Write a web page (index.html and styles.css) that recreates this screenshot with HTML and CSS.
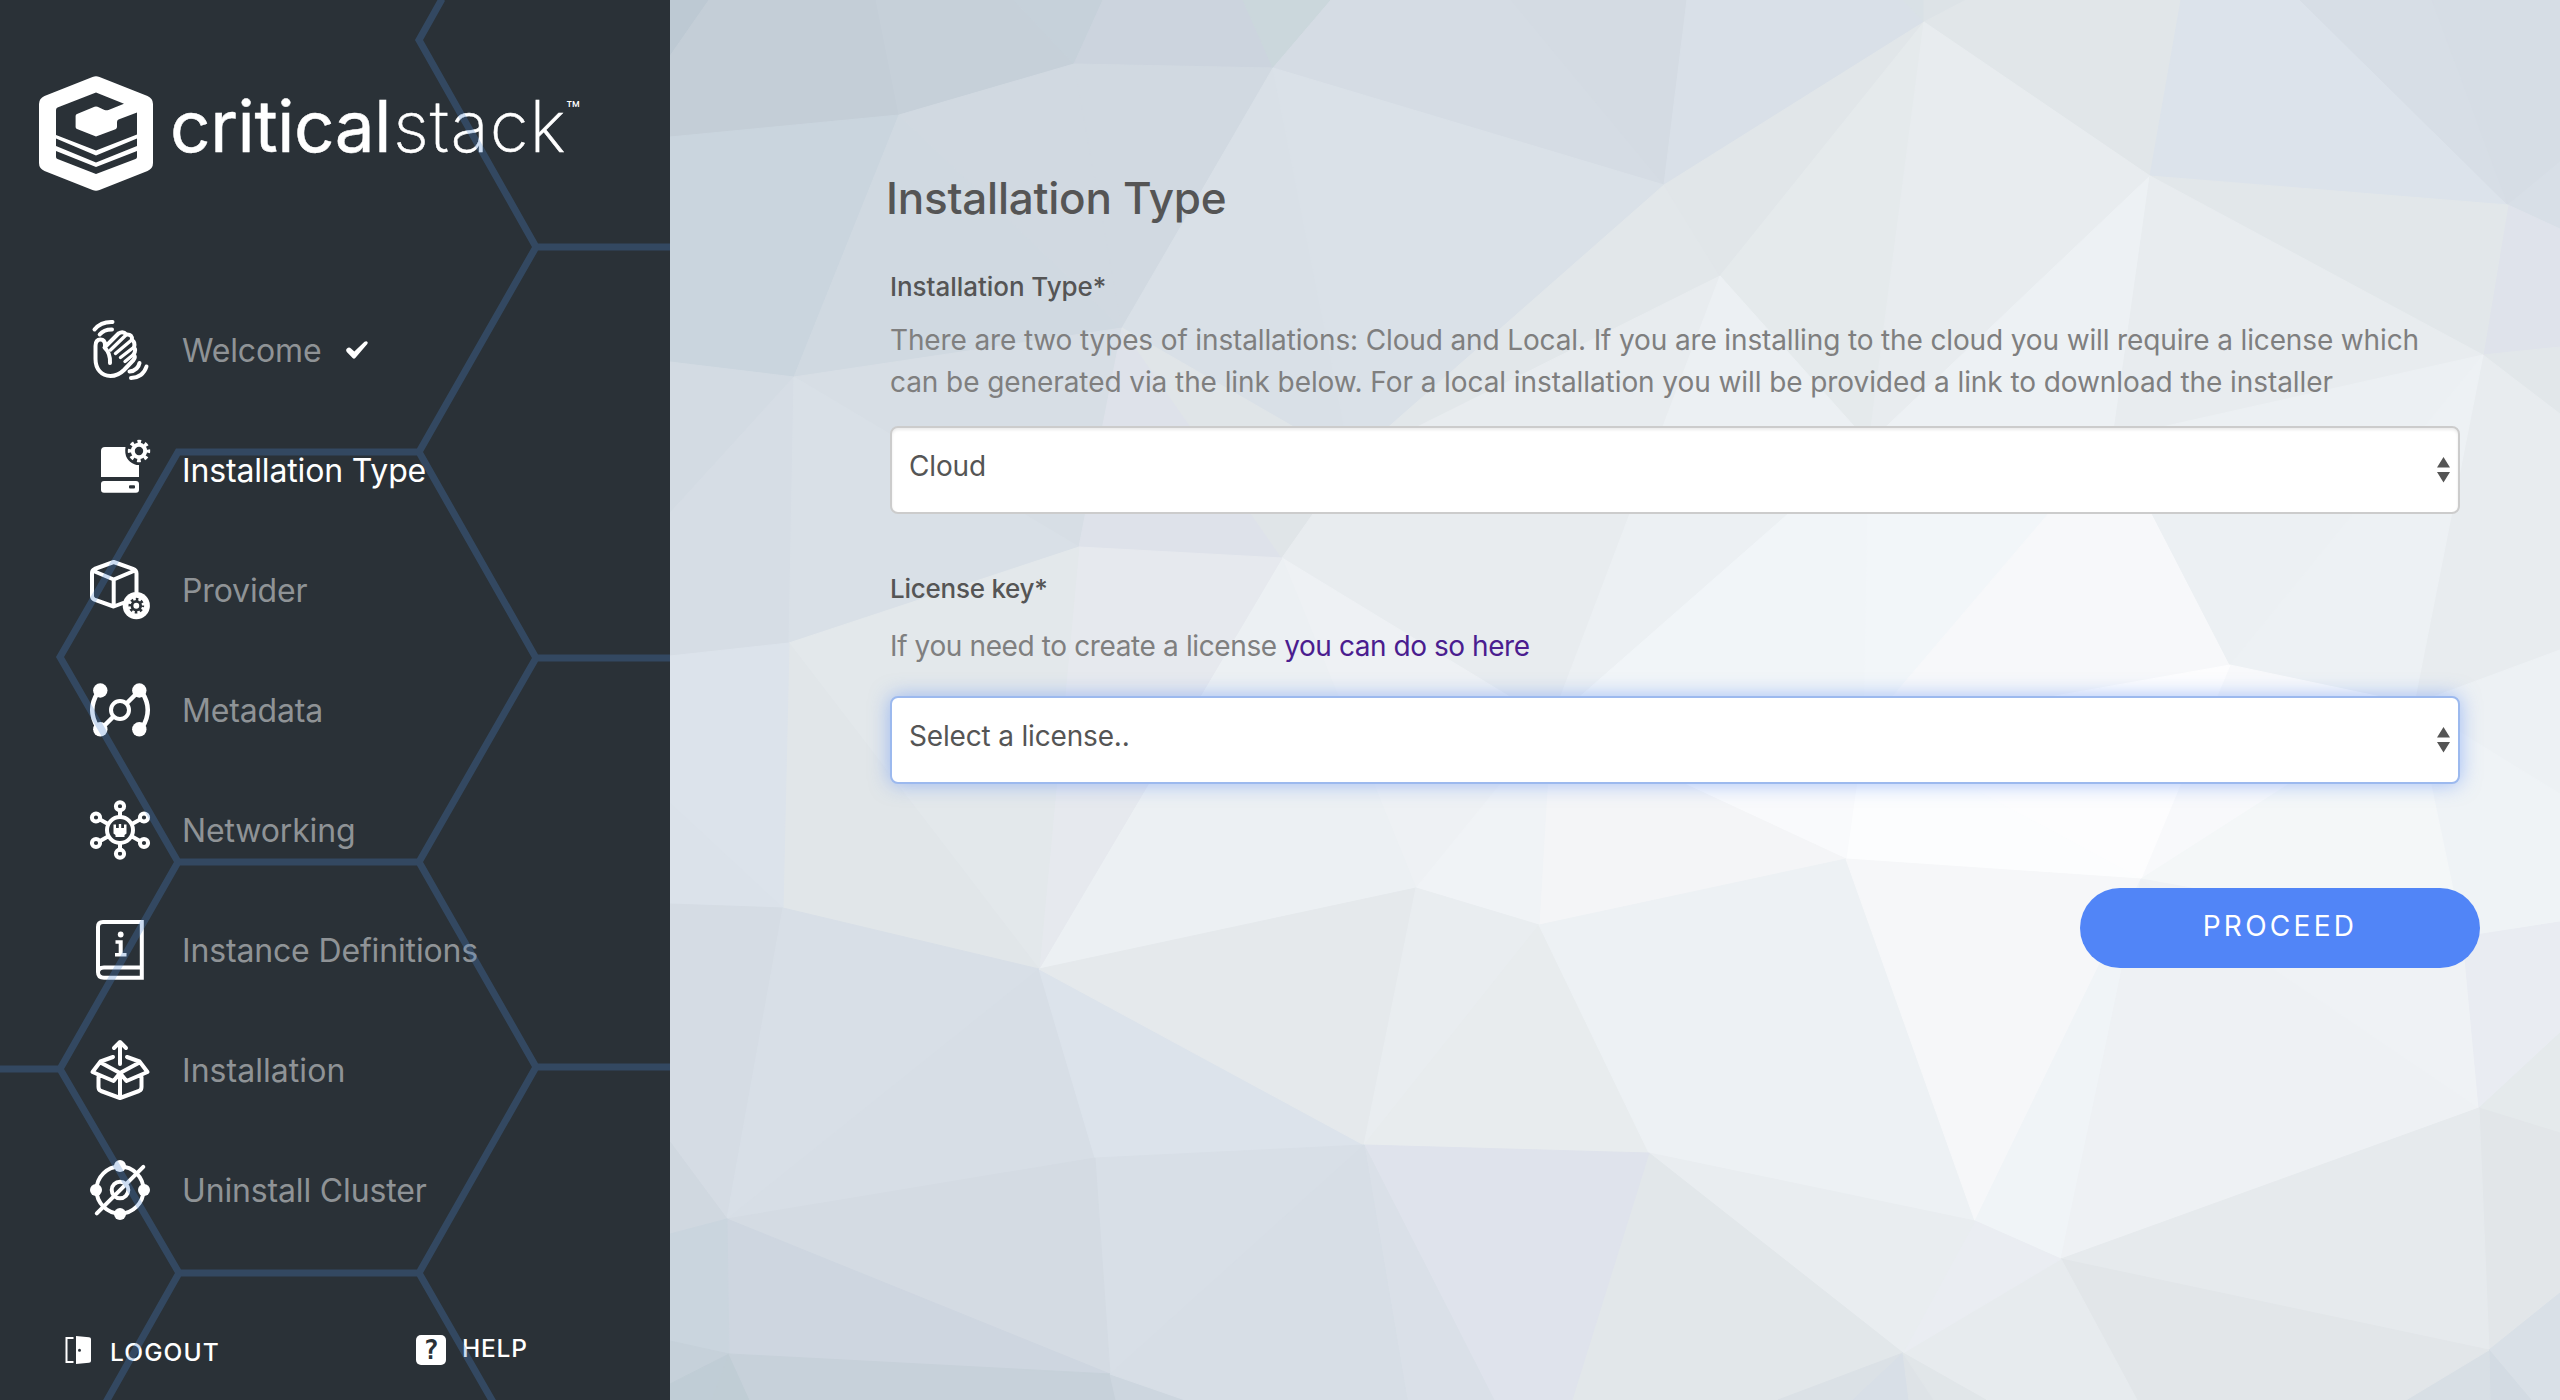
FILE: index.html
```html
<!DOCTYPE html>
<html lang="en">
<head>
<meta charset="utf-8">
<title>Critical Stack - Installation Type</title>
<link rel="stylesheet" href="styles.css">
</head>
<body>
<div class="app">
  <aside class="sidebar">
    <header class="brand">
      <svg class="brand-mark" viewBox="0 0 114 115">
        <path fill="#fff" fill-rule="evenodd" d="M53.500 1Q57 -.6 60.500 1L108.500 20Q114 22.500 114 28V87Q114 92.500 108.500 95L60.500 114Q57 115.600 53.500 114L5.500 95Q0 92.500 0 87V28Q0 22.500 5.500 20Z
          M57 16.500L18.500 31.500Q17 32 17 34V59L57 74.500L98 58.500V36.500L79.500 43.500Q78 44.200 78 46V51Q78 52.500 76.500 53.200L57 60.500L38 53Q36.600 52.300 36.600 51V40Q36.600 38.500 38 38L55.500 30.800Q57 30.200 58.500 30.800L65.500 34Q67.500 34.600 69.500 34L85 27.800Z
          M17 62.500V70L57 86.500L98 70V62.500L57 79.500Z
          M17 75V81Q17 82.500 18.500 83L57 98L96.500 83Q98 82.500 98 81V75L57 91Z"/>
      </svg>
      <span class="wordmark"><span class="w-bold">critical</span><span class="w-thin">stack</span></span><span class="tm">™</span>
    </header>

    <nav class="steps">
      <a class="step">
        <svg class="step-icon line" viewBox="0 0 60 60"><path stroke-width="4" d="M4.500 9.500Q11 1.500 22.500 2M9.700 14.500Q14 9.300 22 9.500M15 27.500V25Q15 19.500 10.500 19.500Q5.500 19.500 5.500 26V39C5.500 49 11.500 56 20.500 56C26 56 30 54 34 50L43.500 40Q46 37 43.500 34.500Q46.500 30 44 27.500Q45.500 22 42 20Q42.500 14 36.500 14.500Q33 10.500 28.500 13.500L14.500 27.500Q20.500 33 20 43"/><path stroke-width="3.400" d="M20.500 30L35.500 15.500M25.500 33.500L41 20.500M30.500 37.500L43.500 27.500M35 41.500L43.500 34.500"/><path stroke-width="4" d="M39.500 51.500Q48 50.500 49.500 43M41 58Q53 57.500 56.500 46.500"/></svg>
        <span class="step-label">Welcome</span>
        <svg class="check" viewBox="0 0 22 18"><path fill="#fff" d="M1 7.500Q3 5.500 5 7.500L8.300 10.500L18.500 .8Q20.500-.5 21.500 1Q22 2 21.300 3L9.300 17Q8 18.300 6.600 17L.8 11Q-.6 9 1 7.500Z"/></svg>
      </a>
      <a class="step current">
        <svg class="step-icon" viewBox="0 0 60 60">
          <path d="M15 7H35.500Q33.500 20 45 24.500Q47 25.200 49 25V37H11V11Q11 7 15 7Z"/>
          <path fill-rule="evenodd" d="M14 41H46Q49 41 49 44V49.700Q49 52.700 46 52.700H14Q11 52.700 11 49.700V44Q11 41 14 41ZM40 45.200Q39 45.200 39 46.200V47.500Q39 48.500 40 48.500H44Q45 48.500 45 47.500V46.200Q45 45.200 44 45.200Z"/>
          <g transform="translate(49 11)"><circle class="gear-ring" r="6.200"/><circle class="gear-teeth" r="9.200"/></g>
        </svg>
        <span class="step-label">Installation Type</span>
      </a>
      <a class="step">
        <svg class="step-icon" viewBox="0 0 60 60">
          <path class="ln" d="M23.700 2L43 8.800Q46.500 10 46.500 13.500V32M23.700 2L4.500 9Q2 10 2 13V36Q2 38.500 4.500 39.600L23.700 46.500L33 43M3.500 11L23.700 19.500L45 10.500M23.700 19.500V46"/>
          <circle cx="46.300" cy="45.700" r="13.600"/>
          <g transform="translate(46.300 45.700) scale(.7)" class="dark"><circle class="gear-ring" r="6.200"/><circle class="gear-teeth" r="9.200"/></g>
        </svg>
        <span class="step-label">Provider</span>
      </a>
      <a class="step">
        <svg class="step-icon" viewBox="0 0 60 60">
          <circle cx="10.300" cy="10.500" r="7.200"/><circle cx="49.300" cy="10.500" r="7.200"/><circle cx="10.300" cy="49.300" r="7.200"/><circle cx="49.300" cy="49.300" r="7.200"/>
          <circle class="ln" cx="30" cy="30" r="9"/>
          <path class="ln thick" d="M37 23L48 12M23 37L12 48M7.500 13Q-3 30 7.500 47M52.500 13Q63 30 52.500 47"/>
        </svg>
        <span class="step-label">Metadata</span>
      </a>
      <a class="step">
        <svg class="step-icon" viewBox="0 0 60 60">
          <circle class="ln" cx="30" cy="30" r="13"/>
          <g class="ln"><circle cx="30" cy="6.300" r="4.100"/><circle cx="6" cy="17.500" r="4.100"/><circle cx="54" cy="17.500" r="4.100"/><circle cx="6" cy="43" r="4.100"/><circle cx="54" cy="43" r="4.100"/><circle cx="30" cy="53.700" r="4.100"/>
          <path d="M30 10V17M30 43V50M10 19.500L18 24M50 19.500L42 24M10 41L18 36.500M50 41L42 36.500"/></g>
          <path d="M23.500 24.500H26V28H28.800V24H31.200V28H34V24.500H36.500V33.500L34.500 35V37H25.500V35L23.500 33.500Z"/>
        </svg>
        <span class="step-label">Networking</span>
      </a>
      <a class="step">
        <svg class="step-icon" viewBox="0 0 60 60">
          <path class="ln miter" d="M51.800 2H13Q8 2 8 7V52Q8 57.800 14 57.800H51.800ZM51.800 47.500H14Q8 47.500 8 52.500"/>
          <circle cx="30.700" cy="14.500" r="2.900"/>
          <path d="M25.500 20.200H32.700V33H36.500V36.600H25V33H28.700V23.800H25.500Z"/>
        </svg>
        <span class="step-label">Instance Definitions</span>
      </a>
      <a class="step">
        <svg class="step-icon line" viewBox="0 0 60 60">
          <path stroke-width="4" d="M30 24V3M24 8L30 2L36 8M23 17L10.500 21.500L2.500 32L23.500 41L30 33L10.500 22.500M37 17L49.500 21.500L57.500 32L36.500 41L30 33L49.500 22.500M8.500 37V47Q8.500 50 11 51L30 58L49 51Q51.500 50 51.500 47V37M30 33V57"/>
        </svg>
        <span class="step-label wide">Installation</span>
      </a>
      <a class="step">
        <svg class="step-icon" viewBox="0 0 60 60">
          <circle class="ln" cx="30" cy="30" r="23.500"/>
          <circle class="ln" cx="30" cy="30" r="8.300"/>
          <path class="ln" d="M6.800 53.300L53.300 6.800"/>
          <circle cx="30" cy="6" r="6"/><circle cx="54" cy="30" r="6"/><circle cx="30" cy="54" r="6"/><circle cx="6" cy="30" r="6"/>
        </svg>
        <span class="step-label">Uninstall Cluster</span>
      </a>
    </nav>

    <footer class="side-footer">
      <a class="foot logout">
        <svg class="door" viewBox="0 0 26 28"><path fill="none" stroke="#fff" stroke-width="2" d="M8.500 2H1.500V26H8.500"/><path fill="#fff" fill-rule="evenodd" d="M11 0L24 1.200Q26 1.500 26 3V25Q26 26.600 24 26.800L11 28ZM14.500 12.800A1.500 1.500 0 1 0 14.500 15.800A1.500 1.500 0 1 0 14.500 12.800Z"/></svg>
        <span class="foot-label">LOGOUT</span>
      </a>
      <a class="foot help"><span class="qmark">?</span><span class="foot-label">HELP</span></a>
    </footer>

    <svg class="hexes" viewBox="0 0 670 1400">
      <path d="M442-1L419 40L536 247L419 452H178L60 657L178 862H419L536 1067L419 1273H179L60 1069L178 862M536 247H671M419 452L536 658L419 862M536 658H671M536 1067H671M-1 1069H60M179 1273L106 1402M419 1273L493 1402"/>
    </svg>
  </aside>

  <main class="content">
    <svg class="mesh" viewBox="0 0 1890 1400" preserveAspectRatio="none" id="mesh"></svg>
    <form class="form">
      <h1 class="title">Installation Type</h1>
      <div class="field">
        <label class="label">Installation Type*</label>
        <p class="hint"><span class="line-a">There are two types of installations: Cloud and Local. If you are installing to the cloud you will require a license which</span><br><span class="line-b">can be generated via the link below. For a local installation you will be provided a link to download the installer</span></p>
        <div class="select"><span class="value">Cloud</span><svg class="arrows" viewBox="0 0 13 26"><path d="M6.500 0L13 10.500H0ZM0 15H13L6.500 25.500Z"/></svg></div>
      </div>
      <div class="field second">
        <label class="label tight">License key*</label>
        <p class="hint one">If you need to create a license <a class="link">you can do so here</a></p>
        <div class="select focused"><span class="value">Select a license..</span><svg class="arrows" viewBox="0 0 13 26"><path d="M6.500 0L13 10.500H0ZM0 15H13L6.500 25.500Z"/></svg></div>
      </div>
      <button class="proceed" type="button">PROCEED</button>
    </form>
  </main>
</div>
<script src="mesh.js"></script>
</body>
</html>
```
FILE: mesh.js
```
// Shared corner points of the faceted backdrop.
var P = {
  A:[229,115],B:[404,64],C:[603,68],D:[124,377],E:[452,328],F:[409,547],G:[612,558],H:[119,643],I:[681,460],
  J:[994,185],K:[1050,276],L:[1254,22],M:[1480,176],N:[1838,205],O:[1813,355],P:[1560,665],Q:[1199,443],R:[1443,438],
  S:[1744,704],T:[881,722],U:[1471,879],V:[746,888],W:[369,969],X:[113,908],Y:[869,925],Z:[694,1145],
  a:[425,1158],b:[57,1219],c:[440,1374],d:[59,1354],e:[1176,859],f:[979,1153],g:[1305,1221],h:[1391,1259],i:[1233,1353],
  j:[1809,1108],k:[1819,1350],l:[1793,937],m:[1194,730],
  t0:[0,0],t1:[39,0],t2:[206,0],t3:[344,0],t4:[433,0],t5:[573,0],t6:[661,0],t7:[841,0],t8:[1017,0],t9:[1233,0],
  u0:[1254,0],u1:[1296,0],u2:[1511,0],u3:[1630,0],u4:[1762,0],u5:[1890,0],
  r1:[1890,162],r2:[1890,229],r3:[1890,347],r4:[1890,414],r5:[1890,650],r6:[1890,794],r7:[1890,922],r8:[1890,1033],r9:[1890,1133],s1:[1890,1293],s2:[1890,1400],
  l1:[0,56],l2:[0,137],l3:[0,362],l4:[0,513],l5:[0,656],l6:[0,803],l7:[0,904],l8:[0,1142],l9:[0,1234],k1:[0,1341],k2:[0,1384],k3:[0,1400],
  b1:[42,1400],b2:[80,1400],b3:[446,1400],b4:[515,1400],b5:[737,1400],b6:[824,1400],b7:[902,1400],b8:[1108,1400],b9:[1183,1400],
  c1:[1239,1400],c2:[1264,1400],c3:[1316,1400],c4:[1467,1400],c5:[1736,1400],c6:[1820,1400],c7:[1861,1400]
};
// Each facet: its corners, then its colour.
var F = [
  't0 t1 l1|bdc9d3','t1 t2 A l2 l1|c4ced7','t2 t3 B A|c6d0d9','t3 t4 B|c6d1da','t4 t5 C B|ccd4de','t5 t6 C|cbd7dc',
  't6 t7 J C|d5dce4','t7 t8 J|d4dbe3','t8 t9 L J|d9e0e8','t9 u0 L|d9e1e6','u0 u1 L|dde3e7','u1 u2 M L|e1e6e9','u2 u3 N M|dce3eb','u3 u4 N|d7dee6','u4 u5 r1 N|d6dde5',
  'r1 r2 N|d8dfe7','N r2 r3 O|dfe3eb','M N O|e2e7ea','O r3 r4|e2e7ea','O r4 r5 S|e8ecef','l2 A D l3|cad5de','A E D|d0d9e1','A B E|d1d9e1','B C E|d1d9e1',
  'C I E|d9e0e7','C J I|dae1e8','J K I|e2e7ea','J L K|e1e6e9','L Q K|e5eaec','L M Q|e8ecef','M R Q|edf1f4','M O R|e8ecef',
  'l3 D l4|d3dbe3','l4 D H l5|d6dde5','D E F|d7dee5','D F H|d9e0e7','E G F|dee2ea','E I G|e0e5e8','I K T G|e8ecef','K Q T|ecf0f3',
  'Q m T|f1f5f8','Q R m|f2f6f9','R P m|f7f8fa','R O P|ecf0f3','P O S|edf1f4','S r5 r6|edf1f4','S r6 r7 l|eff3f6','P S U|f8f9fb','S l U|f4f7f8','P U m|fdfdfe',
  'm U e|fcfdfe','T m e|f9fafc','T e Y|f4f5f7','G T V|eef1f4','T Y V|f0f3f6','G V W|ecf0f3','F G W|e6e9ee','H F W|e3e8eb','H W X|e1e6e9',
  'l5 H X l6|dce3eb','l6 X l7|dbe2ea','l7 X b l8|d5dce4','X W b|d8dfe7','W a b|d7dee6','W Z a|dce3eb','W V Z|e5e9ec','V Y Z|e9edf0','Y f Z|e8ecee','Y e g f|edf1f4','e U g|f6f7f9',
  'U h g|f0f4f7','U j h|eef1f4','U l j|eff2f5','l r7 r8 j|e9ecf2','j r8 r9|e5eaec','j r9 s1 k|e2e6e9','h j k|e6eaed','k s1 s2 c7|d9e0e7','k c7 c6|d3dbe3','k c6 c5|d8dfe5','h k c5 c4|e2e6e9',
  'h c4 c3 i|e7ebee','g h i|eaedf2','f g i|e9edf0','f i b8 b7|e2e7ea','Z f b7 b6|dfe3ec','Z b6 b5|dae0e8','Z b5 b3 c|d7dee6','a Z c|d8dfe7','a c b|d4dbe3','b c d|ced6e0','l8 b l9|d0d8e0',
  'l9 b d k1|cad5de','k1 d k2|c6d1da','k2 d b1 k3|c0cdd6','d b2 b1|c0cdd5','d c b3 b2|c7d1da','c b4 b3|cdd6df','Z b5 b4 c|d7dee6','i b9 b8|dbe1e6','i c1 b9|d8dfe7','i c2 c1|dee3e7','i c3 c2|e1e6e9'
];
var mesh = document.getElementById('mesh');
F.forEach(function (row) {
  var parts = row.split('|');
  var poly = document.createElementNS('http://www.w3.org/2000/svg', 'polygon');
  poly.setAttribute('points', parts[0].split(' ').map(function (k) { return P[k].join(','); }).join(' '));
  poly.setAttribute('fill', '#' + parts[1]);
  poly.setAttribute('stroke', '#' + parts[1]);
  mesh.appendChild(poly);
});
```
FILE: styles.css
```css
* { box-sizing: border-box; }
body { margin: 0; font-family: Inter, "Liberation Sans", sans-serif; color: #555; }
.app { display: flex; width: 2560px; height: 1400px; overflow: hidden; }

.sidebar { position: relative; width: 670px; height: 1400px; background: #2a3137; color: #fff; display: flex; flex-direction: column; }
.hexes { position: absolute; inset: 0; width: 670px; height: 1400px; opacity: .28; pointer-events: none; }
.hexes path { fill: none; stroke: #4a86cf; stroke-width: 7; }
.brand { display: flex; flex: none; align-items: flex-start; height: 290px; padding: 76px 0 0 39px; }
.brand-mark { width: 114px; height: 115px; flex: none; }
.wordmark { display: flex; width: 410px; margin-left: 17px; font-size: 71px; line-height: 100px; white-space: nowrap; }
.w-bold { width: 223px; font-weight: 400; letter-spacing: -.4px; -webkit-text-stroke: .5px #fff; }
.w-thin { font-weight: 200; letter-spacing: 1px; -webkit-text-stroke: .5px #fff; }
.tm { margin: 24px 0 0 -14px; font-size: 23px; line-height: 20px; }

.step { display: flex; align-items: center; height: 120px; padding-left: 90px; }
.step-icon { width: 60px; height: 60px; flex: none; overflow: visible; fill: #fff; stroke-linecap: round; stroke-linejoin: round; }
.step-icon.line { fill: none; stroke: #fff; }
.ln { fill: none; stroke: #fff; stroke-width: 4; }
.ln.thick { stroke-width: 4.5; stroke-linecap: butt; }
.ln.miter { stroke-linejoin: miter; }
.gear-ring { fill: none; stroke: #fff; stroke-width: 4; }
.gear-teeth { fill: none; stroke: #fff; stroke-width: 4; stroke-linecap: butt; stroke-dasharray: 3.6 3.625; stroke-dashoffset: 1.8; }
.dark circle { stroke: #2a3137; }
.step-label { margin-left: 32px; padding-top: 2px; font-size: 32px; line-height: 44px; letter-spacing: -.15px; color: #8f9396; white-space: nowrap; }
.step-label.wide { letter-spacing: .05px; }
.current .step-label { color: #fff; }
.check { width: 22px; height: 18px; margin-left: 25px; }

.side-footer { display: flex; flex: none; margin-top: 84px; font-size: 24.500px; font-weight: 500; }
.foot { display: flex; flex: none; align-items: center; height: 32px; }
.logout { width: 416px; padding-left: 65px; }
.door { width: 26px; height: 28px; }
.foot-label { letter-spacing: 1.100px; }
.logout .foot-label { margin-left: 19px; padding-top: 4px; }
.help .foot-label { margin-left: 16px; padding-bottom: 4px; letter-spacing: .8px; }
.qmark { width: 30px; height: 30px; border-radius: 5px; background: #fff; color: #2a3137; font: bold 26px/30px "DejaVu Sans Mono", monospace; text-align: center; }

.content { position: relative; flex: 1; }
.mesh { position: absolute; inset: 0; width: 1890px; height: 1400px; background: #dfe4e9; }
.form { position: relative; padding: 168px 80px 0 220px; display: flex; flex-direction: column; }
.title { margin: 0 0 42px -4px; font-size: 44px; line-height: 60px; font-weight: 500; letter-spacing: -.25px; }
.field { width: 1570px; }
.field.second { margin-top: 58px; }
.label { display: block; font-size: 26px; line-height: 34px; font-weight: 500; letter-spacing: -.05px; }
.label.tight { letter-spacing: -.25px; }
.hint { margin: 15px 0 23px; font-size: 28px; line-height: 42px; color: #7f7f7f; white-space: nowrap; }
.line-a { letter-spacing: -.135px; }
.line-b { letter-spacing: -.08px; }
.hint.one { margin: 19px 0 29px; letter-spacing: -.38px; }
.link { color: #4b1d8f; letter-spacing: -.45px; }
.select { display: flex; align-items: center; justify-content: space-between; height: 88px; padding: 0 8px 0 17px; background: #fff; border: 2px solid #ccc; border-radius: 8px; box-shadow: inset 0 2px 3px rgba(0,0,0,.08); font-size: 28px; letter-spacing: -.17px; }
.select.focused { border-color: #9cb9ee; box-shadow: 0 0 20px rgba(80,133,247,.5); }
.value { padding-bottom: 9px; line-height: 40px; }
.arrows { width: 13px; height: 26px; fill: #555; }
.proceed { align-self: flex-end; width: 400px; height: 80px; margin-top: 104px; padding: 0 0 4px; border: 0; border-radius: 40px; background: #5185f7; color: #fff; font: 28px/40px Inter, sans-serif; letter-spacing: 3.300px; }
```
